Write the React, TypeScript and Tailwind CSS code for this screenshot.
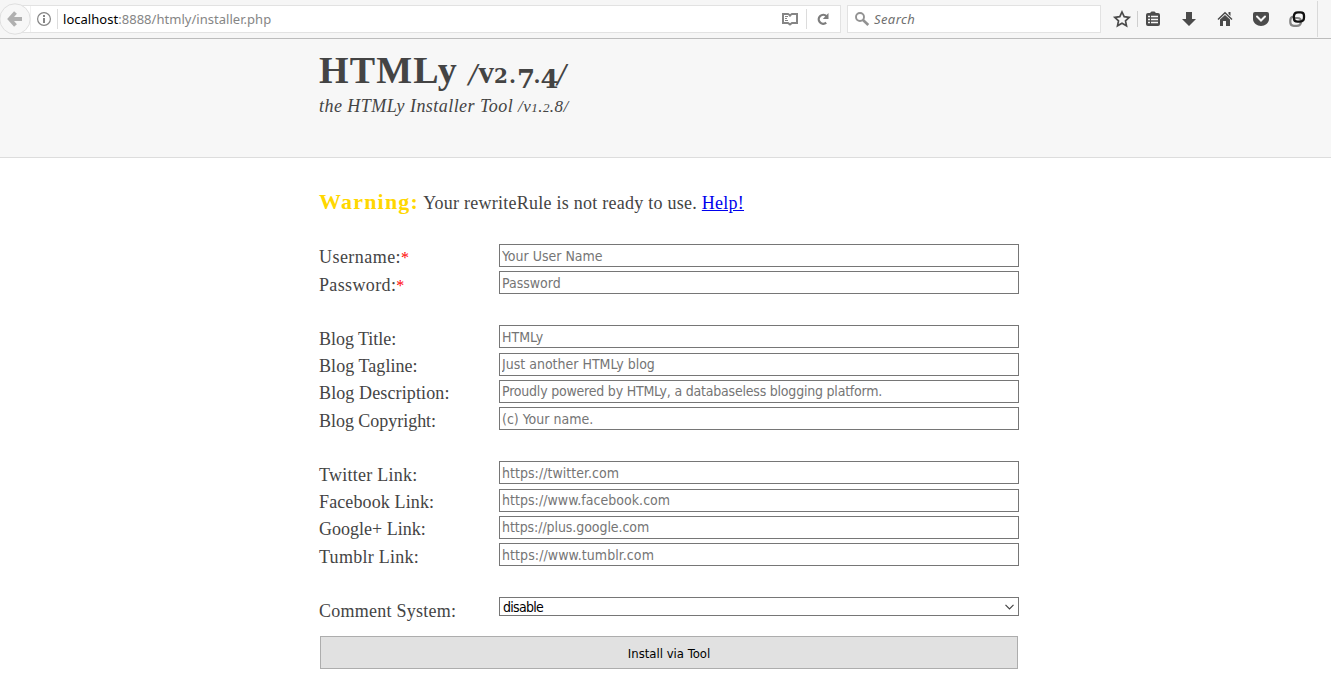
type Field = { label: string; placeholder: string; required?: boolean; spacing: string; inputSpacing?: string };

const groups: Field[][] = [
  [
    { label: "Username:", placeholder: "Your User Name", required: true, spacing: "tracking-[0.45px]" },
    { label: "Password:", placeholder: "Password", required: true, spacing: "tracking-[0.36px]" },
  ],
  [
    { label: "Blog Title:", placeholder: "HTMLy", spacing: "tracking-[-0.04px]" },
    { label: "Blog Tagline:", placeholder: "Just another HTMLy blog", spacing: "tracking-[0.06px]" },
    { label: "Blog Description:", placeholder: "Proudly powered by HTMLy, a databaseless blogging platform.", spacing: "tracking-[0.12px]", inputSpacing: "tracking-[-0.21px]" },
    { label: "Blog Copyright:", placeholder: "(c) Your name.", spacing: "tracking-[-0.03px]" },
  ],
  [
    { label: "Twitter Link:", placeholder: "https://twitter.com", spacing: "tracking-[0.25px]", inputSpacing: "tracking-[0.04px]" },
    { label: "Facebook Link:", placeholder: "https://www.facebook.com", spacing: "tracking-[0.12px]", inputSpacing: "tracking-[0.04px]" },
    { label: "Google+ Link:", placeholder: "https://plus.google.com", spacing: "tracking-[0px]", inputSpacing: "tracking-[-0.07px]" },
    { label: "Tumblr Link:", placeholder: "https://www.tumblr.com", spacing: "tracking-[0.26px]", inputSpacing: "tracking-[0.08px]" },
  ],
];

function Label({ text, required, spacing }: { text: string; required?: boolean; spacing: string }) {
  return (
    <label className={`w-[180px] shrink-0 pt-[3.3px] text-[18px] leading-[21px] whitespace-nowrap ${spacing}`}>
      {text}
      {required && <span className="text-[16px] leading-none text-[#ff0000]">*</span>}
    </label>
  );
}

function Toolbar() {
  return (
    <div className="flex h-[39px] items-start border-b border-[#bcbcbc] bg-[#f6f6f6] font-['Noto_Sans',sans-serif] text-[13px]">
      <div className="flex h-[38px] w-[31px] shrink-0 items-center">
        <svg width="31" height="38" viewBox="0 0 31 38">
          <path d="M22 5.500H31V32.500H22" fill="#fff" stroke="#e2e2e2" />
          <circle cx="15" cy="19" r="15.200" fill="#f7f7f7" stroke="#dfdfdf" />
          <path d="M15.500 12.500 9.700 19l5.800 6.500M10 19h12" fill="none" stroke="#b0b0b0" strokeWidth="3.800" />
        </svg>
      </div>
      <div className="mt-[5px] flex h-[28px] w-[810px] items-center border-y border-r border-[#e2e2e2] bg-white">
        <svg className="ml-[5px]" width="16" height="16" viewBox="0 0 16 16">
          <circle cx="8" cy="8" r="6.400" fill="none" stroke="#858585" strokeWidth="1.200" />
          <path d="M7 4h2v2H7zM7 7h2v5H7z" fill="#858585" />
        </svg>
        <span className="ml-[5px] h-[20px] w-px bg-[#dcdcdc]" />
        <span className="ml-[5px] pt-[2px] tracking-[0.03px] text-[#858585]"><span className="text-black">localhost</span>:8888/htmly/installer.php</span>
        <svg className="mr-[7px] ml-auto" width="18" height="16" viewBox="0 0 18 16">
          <path d="M2 3h5l2 1.300L11 3h5v9h-5l-2 1.500L7 12H2z" fill="none" stroke="#858585" strokeWidth="2" />
          <path d="M9 4v2m0 6v2M4 5.500h3M4 7.500h2M4 9.500h3" stroke="#858585" />
        </svg>
        <span className="h-[20px] w-px bg-[#dcdcdc]" />
        <svg className="mr-[10px] ml-[9px]" width="14" height="14" viewBox="0 0 14 14">
          <path d="M10.500 4.200A4.500 4.500 0 1 0 10.200 10.700" fill="none" stroke="#7d7d7d" strokeWidth="2.300" />
          <path d="M12.500 1v6H6.800z" fill="#7d7d7d" />
        </svg>
      </div>
      <div className="mt-[5px] ml-[6px] flex h-[28px] w-[254px] items-center border border-[#e2e2e2] bg-white text-[#6f6f6f] italic">
        <svg className="ml-[7px]" width="15" height="15" viewBox="0 0 15 15">
          <circle cx="5" cy="5" r="4" fill="none" stroke="#929292" strokeWidth="1.900" />
          <path d="m8 8 5.300 5" stroke="#929292" strokeWidth="2.600" />
        </svg>
        <span className="ml-[4px] pt-[2px] tracking-[0.4px]">Search</span>
      </div>
      <svg className="shrink-0" width="230" height="38" viewBox="1101 0 230 38">
        <path d="m1122 12 2.200 4.700 5 .6-3.700 3.500 1 5-4.500-2.500-4.500 2.500 1-5-3.700-3.500 5-.6z" fill="none" stroke="#4b4b4b" strokeWidth="1.700" />
        <path d="M1137.500 11v16" stroke="#cfcfcf" />
        <path d="M1148 13h2l1.500-1.500h3L1156 13h2q2 0 2 2v9q0 2-2 2h-10q-2 0-2-2v-9q0-2 2-2z" fill="#4b4b4b" />
        <path d="M1148 16.500h2m1 0h7m-10 3h2m1 0h7m-10 3h2m1 0h7" stroke="#f6f6f6" strokeWidth="1.300" />
        <path d="M1186 12h6v7h4l-7 7-7-7h4z" fill="#4b4b4b" />
        <path d="m1218 19.500 7-6.800 7 6.800" fill="none" stroke="#4b4b4b" strokeWidth="1.500" />
        <path d="m1225 15 5 4.500V26h-4v-5h-3v5h-3v-6.500zM1228.500 12h2v4l-2-2z" fill="#4b4b4b" />
        <path d="M1253 14q0-2 2-2h12q2 0 2 2v5c0 4-4 7-8 7s-8-3-8-7z" fill="#4b4b4b" />
        <path d="m1257 16.500 4 4 4-4" fill="none" stroke="#f6f6f6" strokeWidth="2" strokeLinecap="round" />
        <path d="M1293 16.500q-2.700.8-2.700 4v1.800q0 3.500 3.500 3.500h3q3.800 0 4.300-3.800M1294 18h3.500q3.500 0 3.500 3.500" fill="none" stroke="#858585" strokeWidth="2.200" />
        <path d="M1298 12.300h2.500q3.500 0 3.500 3.300v2q0 4-4 4h-2.500q-3.600 0-3.600-3.400v-1.800q0-4.100 4.100-4.100z" fill="none" stroke="#111" strokeWidth="2.300" />
        <path d="M1317.500 1v36" stroke="#d9d9d9" />
      </svg>
    </div>
  );
}

export default function App() {
  return (
    <div className="h-[691px] overflow-hidden bg-white font-['Liberation_Serif',serif] text-[#444]">
      <Toolbar />
      <header className="h-[119px] border-b border-[#ddd] bg-[#f7f7f7] pl-[319px]">
        <h1 className="h-[56px] pt-[9px] text-[38px] leading-[44px] font-bold tracking-[1.2px] whitespace-nowrap">
          HTMLy{" "}
          <span className="font-['DejaVu_Serif',serif] text-[28px] leading-none tracking-[0px]">
            <span className="text-[26px] font-normal tracking-[1px] italic">/</span>
            <span className="font-['Liberation_Serif',serif] text-[31px]">v</span>
            <span className="text-[20px] tracking-[1px]">2.</span>
            <span className="align-[-5px] text-[26px] tracking-[-1.5px]">7</span>
            <span className="text-[20px]">.</span>
            <span className="align-[-5px] text-[26px] tracking-[-1px]">4</span>
            <span className="text-[26px] font-normal italic">/</span>
          </span>
        </h1>
        <p className="text-[18px] leading-[22px] tracking-[0.45px] whitespace-nowrap italic">
          the HTMLy Installer Tool{" "}
          <span className="text-[17px] leading-none">/v<span className="text-[13px]">1</span>.<span className="text-[13px]">2</span>.8/</span>
        </p>
      </header>
      <main className="pl-[319px]">
        <p className="h-[86px] pt-[30px] text-[18px] leading-[28px] tracking-[0.25px] whitespace-nowrap">
          <span className="text-[22px] font-bold tracking-[1.2px] text-[#ffd700]">Warning:</span>{" "}
          Your rewriteRule is not ready to use. <a href="#" className="text-[#0000ee] underline">Help!</a>
        </p>
        <form className="flex w-[700px] flex-col gap-[26.67px]">
          {groups.map((group, i) => (
            <div key={i} className="flex flex-col">
              {group.map((f) => (
                <div key={f.label} className="flex h-[27.33px] items-start">
                  <Label text={f.label} required={f.required} spacing={f.spacing} />
                  <input placeholder={f.placeholder} className={`h-[23px] w-[520px] border border-[#767676] bg-white px-[2px] font-['DejaVu_Sans_Condensed','Noto_Sans',sans-serif] text-[14px] placeholder:text-[#757575] ${f.inputSpacing ?? ""}`} />
                </div>
              ))}
            </div>
          ))}
          <div>
            <div className="flex h-[38.67px] items-start">
              <Label text="Comment System:" spacing="tracking-[0.25px]" />
              <div className="flex h-[19px] w-[520px] items-center justify-between border border-[#767676] bg-white pr-[4px] pl-[3px] font-['DejaVu_Sans_Condensed','Noto_Sans',sans-serif] text-[14px] tracking-[-0.7px] text-black">
                <span className="pt-px">disable</span>
                <svg width="9" height="6" viewBox="0 0 9 6"><path d="m.5 .8 4 4 4-4" fill="none" stroke="#444" strokeWidth="1.200" /></svg>
              </div>
            </div>
            <button type="button" className="ml-px h-[33px] w-[698px] border border-[#adadad] bg-[#e1e1e1] pt-[2px] font-['DejaVu_Sans_Condensed','Noto_Sans',sans-serif] text-[13px] text-black">
              Install via Tool
            </button>
          </div>
        </form>
      </main>
    </div>
  );
}
